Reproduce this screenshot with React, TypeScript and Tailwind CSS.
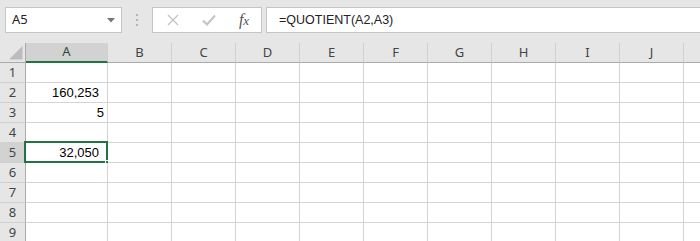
import React from "react";

const COLS = ["A", "B", "C", "D", "E", "F", "G", "H", "I", "J", ""];
const WIDTHS = ["w-[82px]", "w-[64px]", "w-[64px]", "w-[64px]", "w-[64px]", "w-[64px]", "w-[64px]", "w-[64px]", "w-[64px]", "w-[64px]", "w-[64px]"];

const cellValues: Record<number, { text: string; pad: string }> = {
  2: { text: "160,253", pad: "pr-[8px]" },
  3: { text: "5", pad: "pr-[3px]" },
  5: { text: "32,050", pad: "pr-[8px]" },
};

function FormulaBar() {
  return (
    <div className="flex h-[43px] items-start bg-[#e6e6e6] pt-[7px] pl-[5px]">
      {/* name box */}
      <div className="relative flex h-[26px] w-[117px] items-center border border-[#c6c6c6] bg-white pl-[6px] text-[13px] text-[#222] [font-family:'Segoe_UI','Noto_Sans',sans-serif]">
        A5
        <svg className="absolute right-[6px] top-[10px]" width="8" height="5" viewBox="0 0 8 5">
          <path d="M0 0 H8 L4 4.5 Z" fill="#777" />
        </svg>
      </div>
      {/* grip dots */}
      <div className="flex w-[30px] flex-col items-center gap-[3px] pt-[7px]">
        <span className="h-[2px] w-[2px] bg-[#b5b5b5]" />
        <span className="h-[2px] w-[2px] bg-[#b5b5b5]" />
        <span className="h-[2px] w-[2px] bg-[#b5b5b5]" />
      </div>
      {/* cancel / enter / fx */}
      <div className="flex h-[26px] w-[110px] items-center border border-[#c6c6c6] bg-white">
        <div className="flex w-[38px] justify-center pl-[2px]">
          <svg width="12" height="12" viewBox="0 0 12 12">
            <path d="M1 1 L11 11 M11 1 L1 11" stroke="#c2c2c2" strokeWidth="1.3" />
          </svg>
        </div>
        <div className="flex w-[36px] justify-center">
          <svg width="14" height="12" viewBox="0 0 14 12">
            <path d="M1 6.5 L5 10.5 L13 1.5" stroke="#c2c2c2" strokeWidth="2" fill="none" />
          </svg>
        </div>
        <div className="flex w-[34px] items-baseline justify-center italic leading-none text-[#555] [font-family:'Liberation_Serif',serif]">
          <span className="text-[16px]">f</span>
          <span className="text-[13px]">x</span>
        </div>
      </div>
      {/* formula input */}
      <div className="ml-[4px] flex h-[26px] flex-1 items-center border-y border-l border-[#c6c6c6] bg-white pl-[12px] text-[12.5px] text-[#222] [font-family:'Liberation_Sans',sans-serif]">
        =QUOTIENT(A2,A3)
      </div>
    </div>
  );
}

function HeaderRow() {
  return (
    <div className="flex h-[20px]">
      <div className="relative h-[20px] w-[26px] shrink-0 border-r border-b border-[#ababab] bg-[#e6e6e6]">
        <svg className="absolute left-[9px] top-[3px]" width="14" height="14" viewBox="0 0 14 14">
          <path d="M0 13.5 H13.5 V0 Z" fill="#bcbcbc" />
        </svg>
      </div>
      {COLS.map((c, i) => (
        <div
          key={i}
          className={`${WIDTHS[i]} flex h-[20px] shrink-0 items-center justify-center border-r ${
            i === 0 ? "border-b-2 border-b-[#217346] border-r-[#d0d0d0] bg-[#d2d2d2] text-[#2e4a3a]" : "border-b border-b-[#ababab] border-r-[#d0d0d0] bg-[#e6e6e6] text-[#444]"
          } text-[13px] [font-family:'Segoe_UI','Noto_Sans',sans-serif]`}
        >
          {c}
        </div>
      ))}
    </div>
  );
}

function Row({ n }: { n: number }) {
  const val = cellValues[n];
  const selected = n === 5;
  return (
    <div className="flex h-[20px]">
      <div
        className={`flex h-[20px] w-[26px] shrink-0 items-center justify-center border-r border-b ${
          selected ? "border-r-[#217346] bg-[#d2d2d2]" : "border-r-[#ababab] bg-[#e6e6e6]"
        } border-b-[#d0d0d0] text-[13px] text-[#444] [font-family:'Segoe_UI','Noto_Sans',sans-serif]`}
      >
        {n}
      </div>
      {COLS.map((_, i) => (
        <div
          key={i}
          className={`${WIDTHS[i]} relative flex h-[20px] shrink-0 items-center justify-end border-r border-b border-[#d4d4d4] bg-white text-[13px] text-black [font-family:'Liberation_Sans',sans-serif] ${
            i === 0 && val ? val.pad : ""
          }`}
        >
          {i === 0 && val ? val.text : null}
          {i === 0 && selected && (
            <>
              <div className="absolute -left-[2px] -top-[2px] h-[22px] w-[84px] border-2 border-[#217346]" />
              <div className="absolute -bottom-[4px] -right-[4px] h-[6px] w-[6px] border border-white bg-[#217346]" />
            </>
          )}
        </div>
      ))}
    </div>
  );
}

export default function App() {
  return (
    <div className="h-[241px] w-[700px] overflow-hidden bg-white">
      <FormulaBar />
      <HeaderRow />
      {[1, 2, 3, 4, 5, 6, 7, 8, 9].map((n) => (
        <Row key={n} n={n} />
      ))}
    </div>
  );
}
